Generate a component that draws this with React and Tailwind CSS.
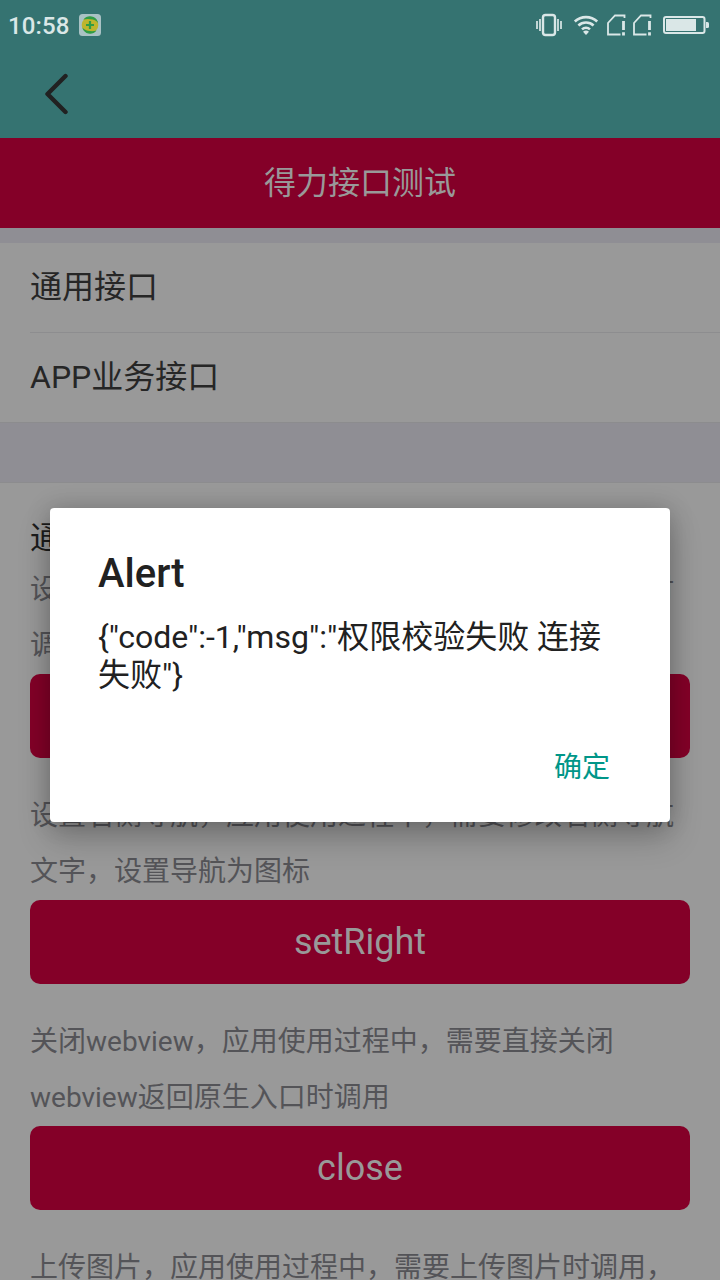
import React from "react";

function StatusBar() {
  return (
    <div className="flex h-[50px] shrink-0 items-center justify-between pl-[8px] pr-[10px]">
      <div className="flex items-center gap-[10px]">
        <span className="pt-[2px] text-[24px] leading-[28px] font-medium tracking-[0.1px] text-[#dae7e7]">10:58</span>
        <svg width="22" height="22" viewBox="0 0 22 22">
          <rect width="22" height="22" rx="3.5" fill="#a9c2c4" />
          <circle cx="11" cy="11" r="8.3" fill="#bdb52c" />
          <path d="M4.500 5.500C7 2.300 11 1.500 14.500 3.100c2.600 1.300 4.200 3.400 4.700 6.100-1.500-2-3.200-3.200-5.500-3.700C10.500 4.800 7.500 4.600 4.500 5.500Z" fill="#2f9c45" />
          <path d="M17.500 16.500c-2.500 3.200-6.500 4-10 2.400-2.400-1.200-3.700-3-4-5.300 1.500 1.700 3 2.600 5.300 3.100 3.200.700 5.900.7 8.700-.200Z" fill="#2f9c45" />
          <path d="M11 7v8M7 11h8" stroke="#2f9c45" strokeWidth="2.200" />
        </svg>
      </div>
      <svg width="176" height="30" viewBox="534 10 176 30" fill="none" stroke="#dae7e7">
        <rect x="543" y="15" width="12" height="20" rx="2.500" strokeWidth="2.400" />
        <path d="M537 21v8M540 19v12M558 19v12M561 21v8" strokeWidth="1.700" />
        <path d="M574.800 21.500a16.500 16.500 0 0 1 22.400 0M578.400 25.500a11.200 11.200 0 0 1 15.200 0M582 29.400a6 6 0 0 1 8 0" strokeWidth="2.600" />
        <path d="M586 35l-3-3.200a4.500 4.500 0 0 1 6 0Z" fill="#dae7e7" stroke="none" />
        <path d="M624.500 18v-2.500H615l-7 7.500v11.500h12.500" strokeWidth="1.800" />
        <path d="M623.500 21v9M623.500 32.200v3.300" strokeWidth="2.800" />
        <path d="M650.500 18v-2.500H641l-7 7.500v11.500h12.500" strokeWidth="1.800" />
        <path d="M649.500 21v9M649.500 32.200v3.300" strokeWidth="2.800" />
        <rect x="664" y="17" width="40.500" height="16" rx="2" strokeWidth="2" />
        <rect x="666" y="19" width="30" height="12" fill="#dae7e7" stroke="none" />
        <path d="M706 22h1.500q1.500 0 1.500 1.500v3q0 1.500-1.500 1.500H706Z" fill="#dae7e7" stroke="none" />
      </svg>
    </div>
  );
}

const sections = [
  { lines: ["设置标题，应用使用过程中，需要修改页面的标题时", "调用"], label: "setTitle" },
  { lines: ["设置右侧导航，应用使用过程中，需要修改右侧导航", "文字，设置导航为图标"], label: "setRight" },
  { lines: ["关闭webview，应用使用过程中，需要直接关闭", "webview返回原生入口时调用"], label: "close" },
  { lines: ["上传图片，应用使用过程中，需要上传图片时调用，"], label: null },
];

function ApiSection({ lines, label }) {
  return (
    <section className="flex flex-col">
      {lines.map((line) => (
        <p key={line} className="h-[56px] text-[28px] leading-[56px] whitespace-nowrap text-[#545458]">{line}</p>
      ))}
      {label && (
        <button className="mb-[30px] h-[84px] rounded-[10px] bg-[#840028] text-[36px] leading-[84px] text-[#999999]">
          {label}
        </button>
      )}
    </section>
  );
}

function AlertDialog() {
  return (
    <div className="absolute top-[508px] left-[50px] flex h-[314px] w-[620px] flex-col rounded-[4px] bg-white px-[48px] text-[#212121] shadow-[0_16px_32px_rgba(0,0,0,0.22),0_0_24px_rgba(0,0,0,0.18)]">
      <h2 className="mt-[42px] text-[40px] leading-[48px] font-medium">Alert</h2>
      <p className="mt-[20px] text-[32px] leading-[38px]">
        {'{"code":-1,"msg":"权限校验失败 连接'}
        <br />
        {'失败"}'}
      </p>
      <button className="mt-[54px] mr-[12px] self-end text-[28px] leading-[40px] text-[#009688]">确定</button>
    </div>
  );
}

export default function App() {
  return (
    <div className="relative flex h-[1280px] w-[720px] flex-col overflow-hidden bg-[#999999] font-['Roboto','Noto_Sans_CJK_SC',sans-serif]">
      <header className="flex h-[138px] shrink-0 flex-col bg-[#357371]">
        <StatusBar />
        <div className="flex h-[88px] items-center pl-[44px]">
          <svg width="26" height="42" viewBox="0 0 26 42" fill="none" stroke="#212121" strokeWidth="4.4" strokeLinecap="round" strokeLinejoin="round">
            <path d="M21.500 3L3.500 21L21.500 39" />
          </svg>
        </div>
      </header>
      <h1 className="h-[90px] shrink-0 bg-[#840028] text-center text-[32px] leading-[90px] text-[#999999]">得力接口测试</h1>
      <div className="h-[15px] shrink-0 bg-[#8f8e94]" />
      <nav className="flex shrink-0 flex-col pl-[30px] text-[32px] text-[#262626]">
        <a className="h-[90px] border-b border-[#8d8d8f] leading-[89px]">通用接口</a>
        <a className="h-[89px] leading-[89px]">APP业务接口</a>
      </nav>
      <div className="h-[61px] shrink-0 border-y border-[#8c8c8e] bg-[#8f8e94]" />
      <main className="flex flex-col px-[30px] pt-[31px]">
        <h2 className="h-[48px] text-[32px] leading-[48px] text-[#1c1c1c]">通用接口</h2>
        {sections.map((section) => (
          <ApiSection key={section.lines[0]} {...section} />
        ))}
      </main>
      <AlertDialog />
    </div>
  );
}
